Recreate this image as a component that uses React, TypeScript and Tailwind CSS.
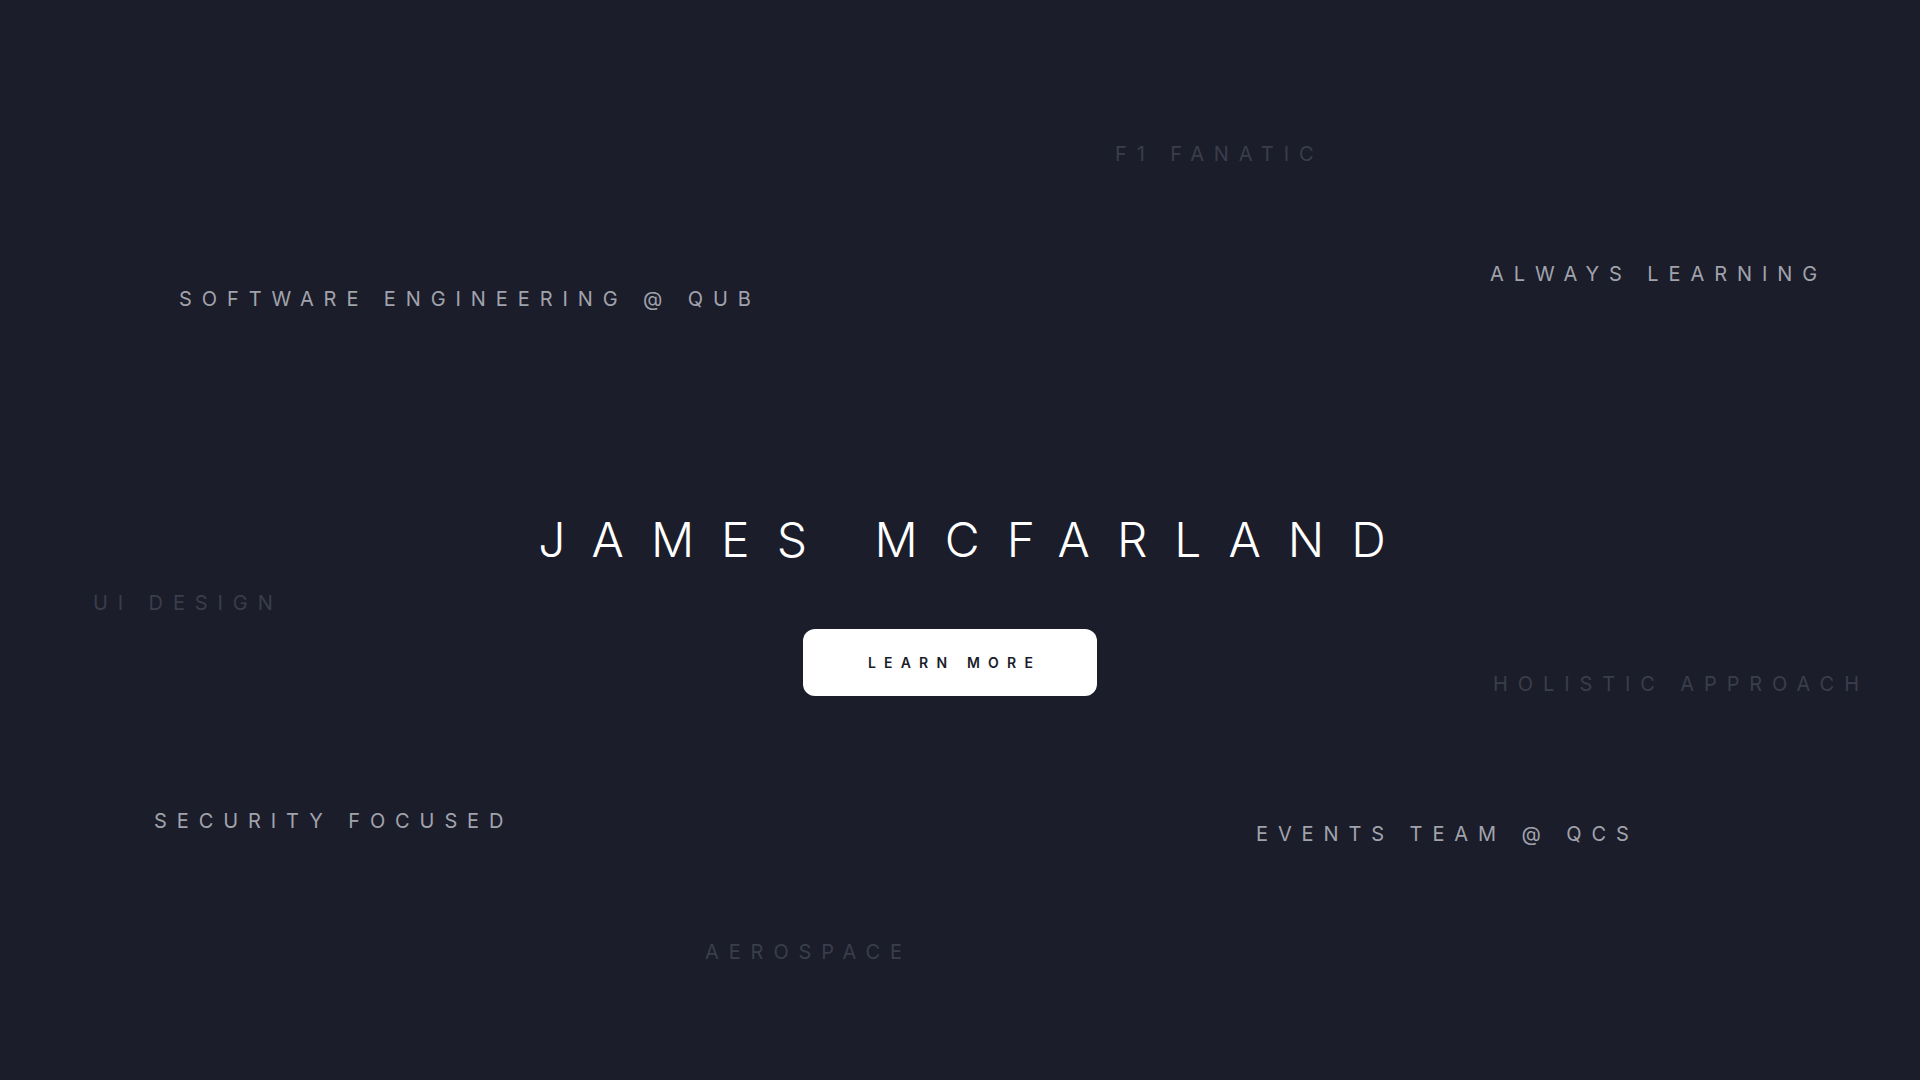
import React from "react";

type Word = { text: string; left: number; top: number; dim: boolean };

const words: Word[] = [
  { text: "F1 FANATIC", left: 1115, top: 144, dim: true },
  { text: "SOFTWARE ENGINEERING @ QUB", left: 179, top: 289, dim: false },
  { text: "ALWAYS LEARNING", left: 1490, top: 264, dim: false },
  { text: "UI DESIGN", left: 93, top: 593, dim: true },
  { text: "HOLISTIC APPROACH", left: 1493, top: 674, dim: true },
  { text: "SECURITY FOCUSED", left: 154, top: 811, dim: false },
  { text: "EVENTS TEAM @ QCS", left: 1256, top: 824, dim: false },
  { text: "AEROSPACE", left: 705, top: 942, dim: true },
];

export default function App() {
  return (
    <div className="relative h-[1080px] w-full overflow-hidden bg-[#1b1d2a] font-['Inter','Noto_Sans',sans-serif]">
      {words.map((w) => (
        <span
          key={w.text}
          className={
            "absolute whitespace-nowrap text-[20px] leading-none tracking-[0.495em] " +
            (w.dim ? "text-[#3a3d4b]" : "text-[#a1a3ac]")
          }
          style={{ left: w.left, top: w.top }}
        >
          {w.text}
        </span>
      ))}
      <main className="flex flex-col items-center pt-[516px]">
        <h1 className="pl-[31px] text-[48px] font-light leading-none tracking-[27px] text-white">
          JAMES MCFARLAND
        </h1>
        <button className="mr-[20px] mt-[65px] flex h-[67px] items-center rounded-xl bg-white pl-[65px] pr-[56px] text-sm font-semibold tracking-[8.2px] text-[#1b1d2a]">
          LEARN MORE
        </button>
      </main>
    </div>
  );
}
